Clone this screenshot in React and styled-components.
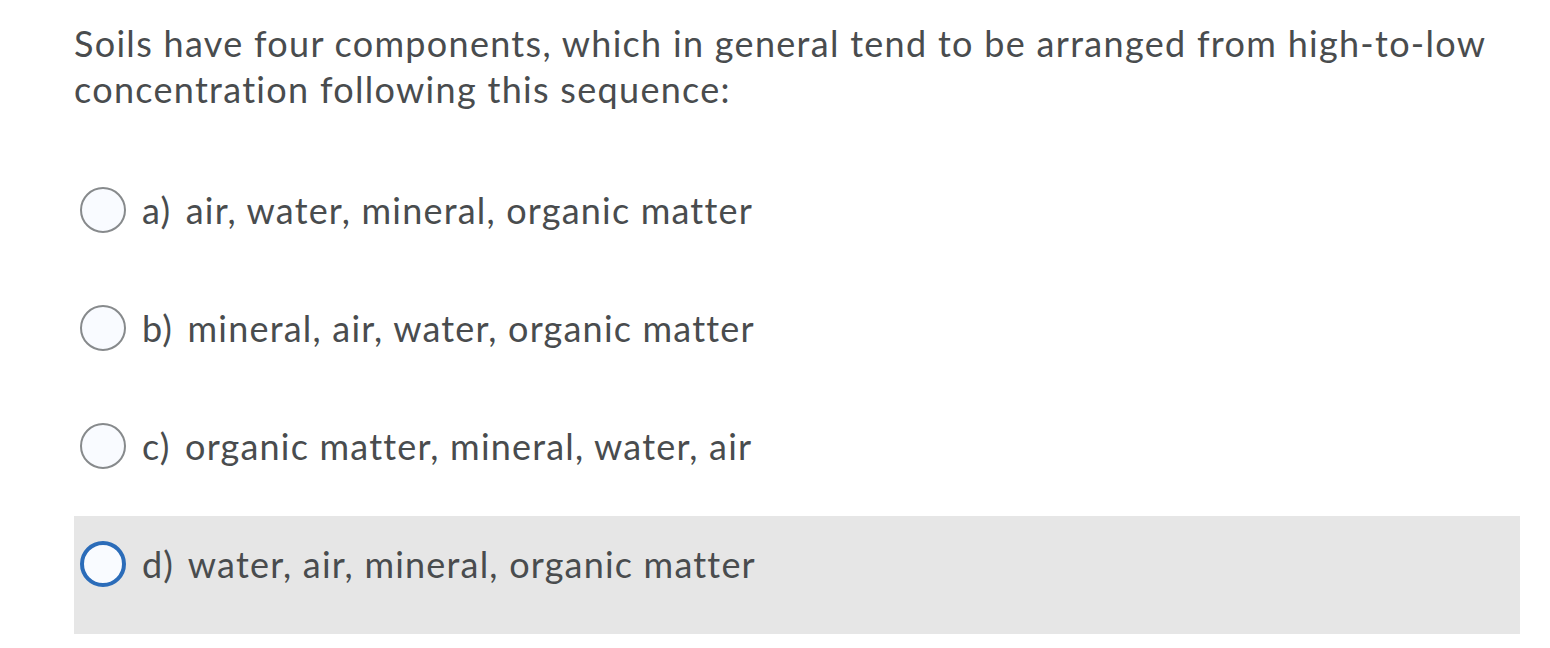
import React from 'react'
import styled, { createGlobalStyle } from 'styled-components'

const GlobalStyle = createGlobalStyle`
  body {
    margin: 0;
    background: #fff;
    font-family: Lato, "Open Sans", sans-serif;
    color: #494c4e;
    font-variant-ligatures: none;
  }
`

const Page = styled.div`
  padding: 20px 30px 0 74px;
`

const Question = styled.p`
  margin: 0;
  font-size: 36px;
  line-height: 46px;
  font-weight: 400;
  letter-spacing: 1.3px;
`

const Options = styled.div`
  margin-top: 50px;
  display: flex;
  flex-direction: column;
`

const Option = styled.label`
  display: flex;
  align-items: flex-start;
  height: 118px;
  box-sizing: border-box;
  padding: 25px 0 0 6px;
  background: ${(p) => (p.focused ? '#e6e6e6' : 'transparent')};
`

const Radio = styled.span`
  width: 46px;
  height: 46px;
  box-sizing: border-box;
  border-radius: 50%;
  flex-shrink: 0;
  background: #f9fbff;
  border: ${(p) => (p.focused ? '4px solid #2b6cb9' : '2px solid #878a8c')};
`

const Text = styled.span`
  margin-left: 16px;
  font-size: 36px;
  line-height: 46px;
  letter-spacing: 1.2px;
`

const Letter = styled.span`
  margin-right: 4px;
`

const options = [
  ['a)', 'air, water, mineral, organic matter'],
  ['b)', 'mineral, air, water, organic matter'],
  ['c)', 'organic matter, mineral, water, air'],
  ['d)', 'water, air, mineral, organic matter'],
]

const App = () => {
  return (
    <>
      <GlobalStyle />
      <Page>
        <Question>
          Soils have four components, which in general tend to be arranged from high-to-low
          <br />
          concentration following this sequence:
        </Question>
        <Options>
          {options.map(([letter, text], i) => (
            <Option key={i} focused={i === 3}>
              <Radio focused={i === 3} />
              <Text>
                <Letter>{letter}</Letter> {text}
              </Text>
            </Option>
          ))}
        </Options>
      </Page>
    </>
  )
}

export default App
